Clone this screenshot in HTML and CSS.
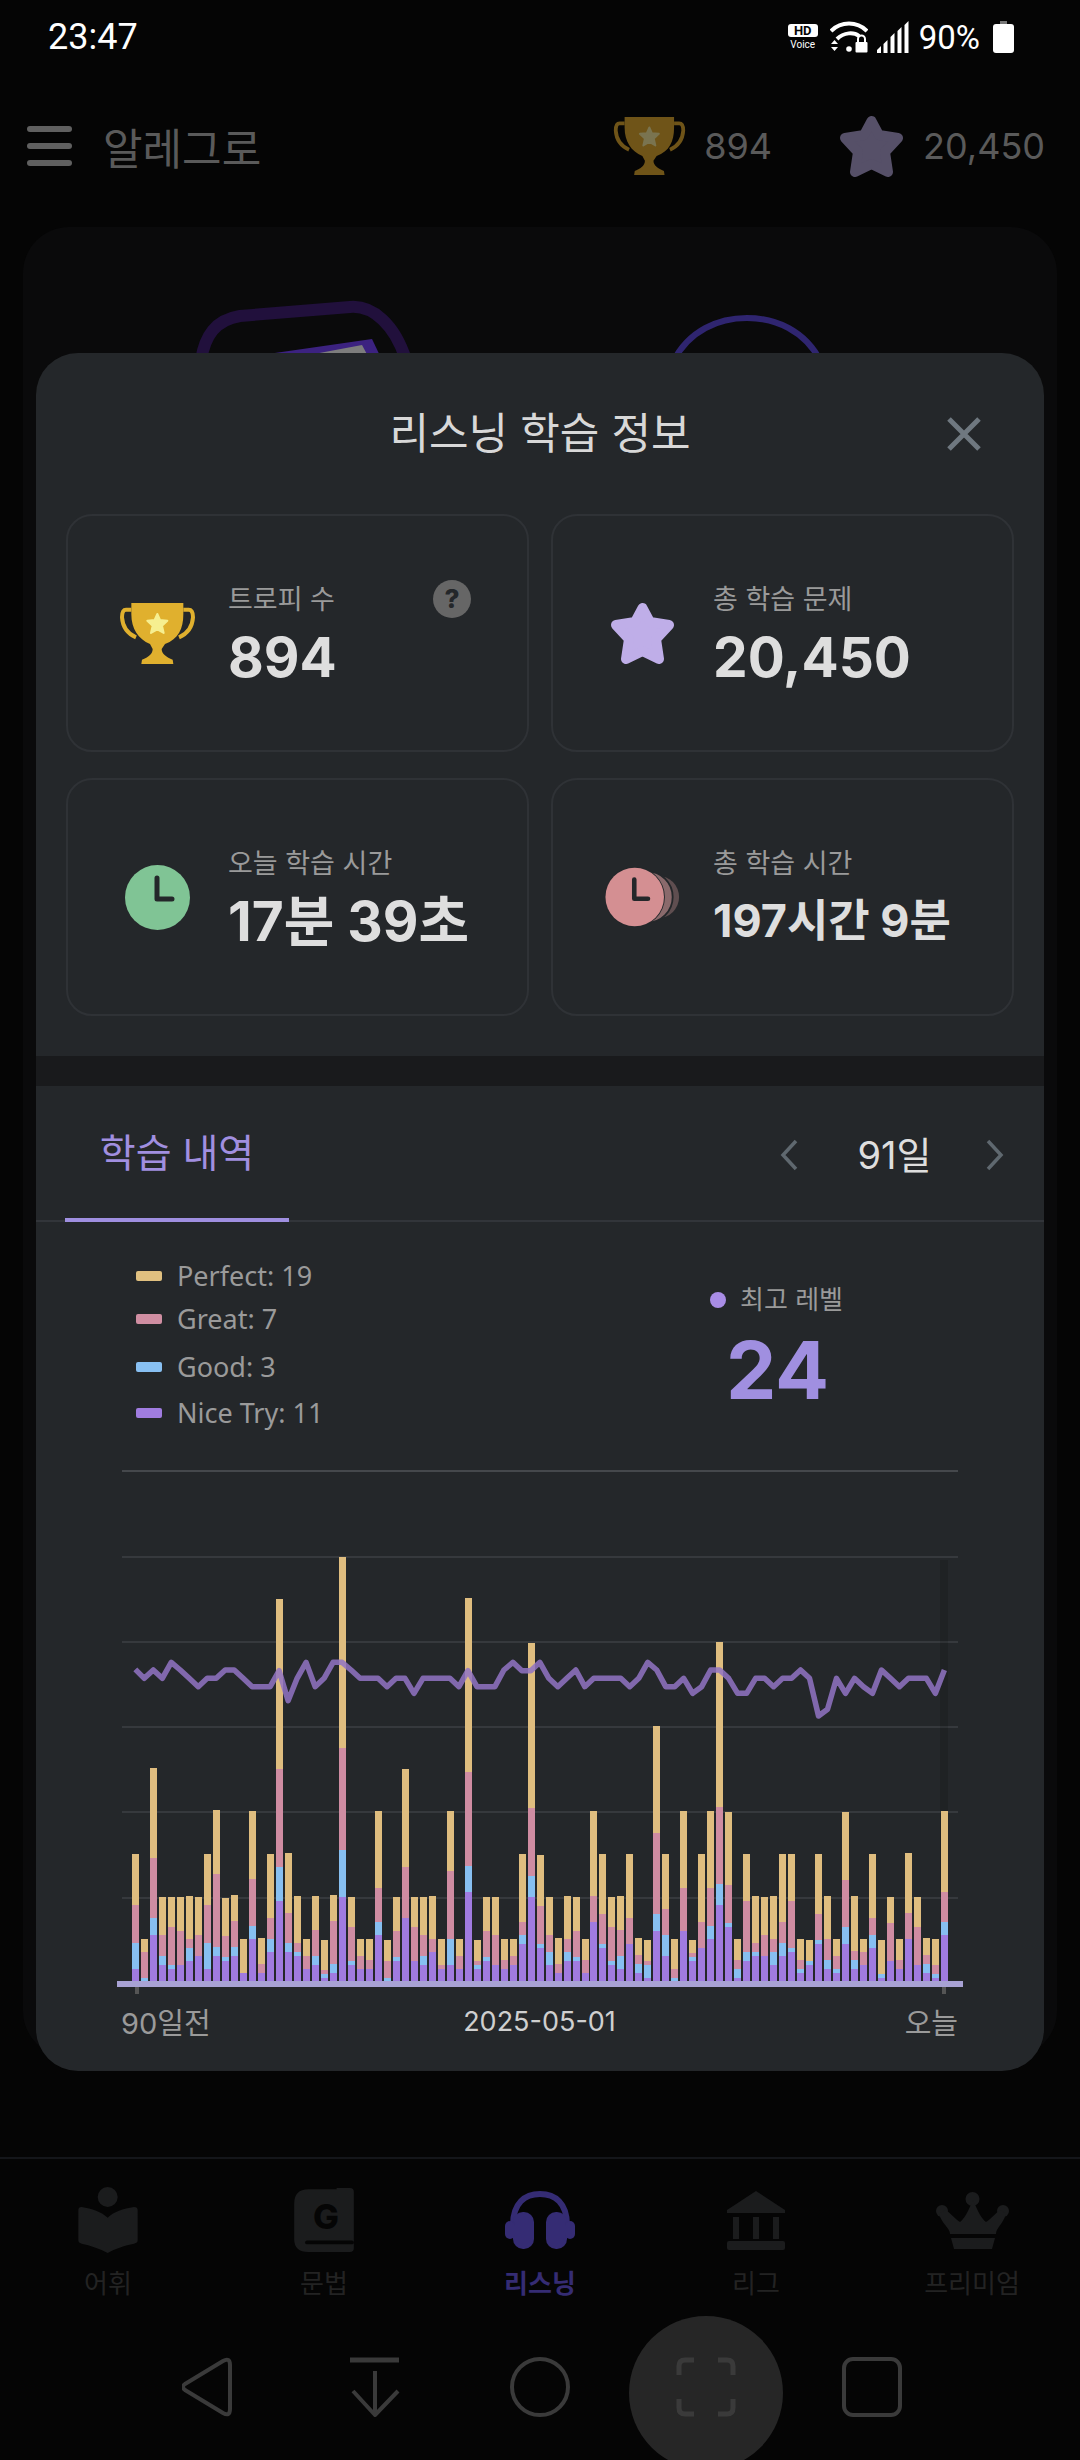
FILE: index.html
```html
<!DOCTYPE html>
<html lang="ko">
<head>
    <meta charset="utf-8">
    <title>알레그로</title>
    <link rel="stylesheet" href="styles.css">
</head>
<body>
    <svg class="defs" width="0" height="0">
        <symbol id="icon-trophy" viewBox="30 42 225 183">
            <path class="cup-handle" d="M64 62 H48 C38 62 36 72 36 85 C38 115 55 135 78 145"/>
            <path class="cup-handle" d="M220 62 H236 C246 62 249 72 249 85 C247 115 230 135 207 145"/>
            <path class="cup" d="M64 42 H220 V75 C220 120 205 150 165 165 L155 180 C155 195 170 205 188 212 L190 225 H94 L96 212 C115 205 128 195 128 180 L120 165 C85 150 64 120 64 75 Z"/>
            <polygon class="cup-star" points="142,75 150,93 172,95 156,110 161,132 142,121 123,132 128,110 112,95 134,93"/>
        </symbol>
        <symbol id="icon-star" viewBox="0 0 63 61">
            <polygon class="star-shape" points="31.5,5 39,19 58,22 45,36 48,56 31.5,48 15,56 18,36 5,22 24,19"/>
        </symbol>
    </svg>

    <div class="status-bar">
        <span class="clock">23:47</span>
        <div class="status-icons">
            <div class="hd-voice"><b>HD</b><span>Voice</span></div>
            <svg class="wifi" width="38" height="32" viewBox="0 0 38 32">
                <path d="M1 10 C11 0 27 0 37 10" fill="none" stroke="#fff" stroke-width="4"/>
                <path d="M7 18 C14 11 24 11 29 15" fill="none" stroke="#fff" stroke-width="4"/>
                <circle cx="19" cy="28" r="2.8" fill="#fff"/>
                <path d="M1 23 L4.5 19 L8 23 Z M1 26 H8 L4.5 30 Z" fill="#fff"/>
                <path d="M28 21 V18 A3.5 3.5 0 0 1 35 18 V21" fill="none" stroke="#fff" stroke-width="2"/>
                <rect x="25.5" y="21" width="12" height="10.5" rx="1" fill="#fff"/>
            </svg>
            <svg class="signal" width="32" height="32" viewBox="0 0 32 32" fill="#fff">
                <path d="M0 32 V29 L4 25 V32 Z M6.5 32 V23 L10.5 19 V32 Z M13.5 32 V16 L17.5 12 V32 Z M20.5 32 V10 L24.5 6 V32 Z M27.5 32 V4 L31.5 0 V32 Z"/>
            </svg>
            <span class="battery-text">90%</span>
            <div class="battery"></div>
        </div>
    </div>

    <div class="app-header">
        <div class="menu-btn"><span></span><span></span><span></span></div>
        <div class="app-title">알레그로</div>
        <div class="header-stats">
            <svg class="trophy trophy-dim" width="73" height="58"><use href="#icon-trophy"/></svg>
            <span class="header-num">894</span>
            <svg class="star star-dim" width="63" height="61"><use href="#icon-star"/></svg>
            <span class="header-num">20,450</span>
        </div>
    </div>

    <div class="main">
        <div class="back-card">
            <svg class="back-device" width="217" height="60" viewBox="0 0 217 60">
                <path d="M6 60 C10 36 20 20 45 16 L155 7 C178 5 200 25 211 60" fill="none" stroke="#21103c" stroke-width="12"/>
                <polygon points="32,60 177,39 187,60" fill="#3c2280"/>
                <polygon points="87,60 167,45 175,60" fill="#7d7d7d"/>
            </svg>
            <svg class="back-arc" width="156" height="46" viewBox="0 0 156 46">
                <path d="M4 47 C20 15 50 3 78 3 C106 3 136 15 152 47" fill="none" stroke="#2f2570" stroke-width="6"/>
            </svg>
        </div>
    </div>

    <div class="tab-bar">
        <div class="tab">
            <div class="tab-icon">
                <svg width="60" height="66" viewBox="55 30 178 198">
                    <circle cx="143" cy="60" r="30"/>
                    <path d="M55 100 Q55 90 65 90 C95 95 125 105 143 122 C160 105 190 95 222 90 Q233 90 233 100 V190 Q233 198 222 200 C195 205 165 215 143 228 C120 215 90 205 65 200 Q55 198 55 190 Z"/>
                </svg>
            </div>
            <span>어휘</span>
        </div>
        <div class="tab">
            <div class="tab-icon">
                <svg width="60" height="64" viewBox="702 32 180 193">
                    <path d="M745 36 H830 V32 H870 Q882 32 882 44 V213 Q882 225 870 225 H745 Q702 225 702 185 V80 Q702 36 745 36 Z"/>
                    <rect x="735" y="190" width="147" height="12" rx="6" fill="#050505"/>
                    <text class="book-letter" x="798" y="155" text-anchor="middle">G</text>
                </svg>
            </div>
            <span>문법</span>
        </div>
        <div class="tab tab-active">
            <div class="tab-icon">
                <svg width="70" height="58" viewBox="0 0 70 58">
                    <path class="band" d="M8 34 C8 12 20 3 35 3 C50 3 62 12 62 34"/>
                    <rect x="8" y="21" width="21" height="37" rx="10"/>
                    <rect x="41" y="21" width="21" height="37" rx="10"/>
                    <rect x="0" y="30" width="10" height="18" rx="5"/>
                    <rect x="60" y="30" width="10" height="18" rx="5"/>
                </svg>
            </div>
            <span>리스닝</span>
        </div>
        <div class="tab">
            <div class="tab-icon">
                <svg width="58" height="59" viewBox="0 0 58 59">
                    <path d="M29 0 L58 19 V22 H0 V19 Z"/>
                    <rect x="6" y="26" width="6" height="22"/>
                    <rect x="26" y="26" width="6" height="22"/>
                    <rect x="46" y="26" width="6" height="22"/>
                    <rect x="0" y="50" width="58" height="9" rx="2"/>
                </svg>
            </div>
            <span>리그</span>
        </div>
        <div class="tab">
            <div class="tab-icon">
                <svg width="73" height="57" viewBox="0 0 73 57">
                    <circle cx="36.5" cy="7" r="7"/>
                    <circle cx="6" cy="19" r="6"/>
                    <circle cx="67" cy="19" r="6"/>
                    <path d="M37 8 C42 20 46 27 50 30 C55 27 60 20 65 18 L70 22 C67 32 60 36 60 42 H14 C14 36 6 32 3 22 L9 18 C14 20 19 27 24 30 C28 27 32 20 37 8 Z"/>
                    <path d="M15 46 H59 L56 57 H18 Z"/>
                </svg>
            </div>
            <span>프리미엄</span>
        </div>
    </div>

    <div class="system-nav">
        <div class="sys-item">
            <svg width="52" height="60" viewBox="0 0 52 60">
                <path d="M3 27 L41 4 Q48 0 48 8 V52 Q48 60 41 56 L3 33 Q-1 30 3 27 Z"/>
            </svg>
        </div>
        <div class="sys-item">
            <svg width="54" height="60" viewBox="0 0 54 60">
                <path d="M3 3 H52" stroke-width="5"/>
                <path d="M28 14 V58 M6 34 L28 58 L51 34"/>
            </svg>
        </div>
        <div class="sys-item">
            <svg width="60" height="60" viewBox="0 0 60 60"><circle cx="30" cy="30" r="28"/></svg>
        </div>
        <div class="sys-item">
            <div class="capture-btn">
                <svg width="60" height="60" viewBox="0 0 60 60">
                    <path d="M3 18 V9 Q3 3 9 3 H18 M42 3 H51 Q57 3 57 9 V18 M57 42 V51 Q57 57 51 57 H42 M18 57 H9 Q3 57 3 51 V42" stroke-width="5"/>
                </svg>
            </div>
        </div>
        <div class="sys-item">
            <svg width="60" height="60" viewBox="0 0 60 60"><rect x="2" y="2" width="56" height="56" rx="9"/></svg>
        </div>
    </div>

    <!-- 모달 -->
    <div class="modal">
        <div class="modal-head">
            <h2>리스닝 학습 정보</h2>
            <svg class="close-btn" width="36" height="36" viewBox="0 0 36 36">
                <path d="M3 3 L33 33 M33 3 L3 33"/>
            </svg>
        </div>

        <div class="stats">
            <div class="stat-card">
                <div class="stat-icon">
                    <svg class="trophy" width="75" height="61"><use href="#icon-trophy"/></svg>
                </div>
                <div class="stat-text">
                    <div class="stat-label">트로피 수</div>
                    <div class="stat-value">894</div>
                </div>
                <div class="help-badge">?</div>
            </div>
            <div class="stat-card">
                <div class="stat-icon">
                    <svg class="star" width="63" height="61"><use href="#icon-star"/></svg>
                </div>
                <div class="stat-text">
                    <div class="stat-label">총 학습 문제</div>
                    <div class="stat-value">20,450</div>
                </div>
            </div>
            <div class="stat-card">
                <div class="stat-icon">
                    <svg width="65" height="65" viewBox="0 0 65 65">
                        <circle cx="32.5" cy="32.5" r="32.5" fill="#80c495"/>
                        <path class="clock-hand" d="M32 13 V34 H47"/>
                    </svg>
                </div>
                <div class="stat-text">
                    <div class="stat-label">오늘 학습 시간</div>
                    <div class="stat-value">17분 39초</div>
                </div>
            </div>
            <div class="stat-card">
                <div class="stat-icon stat-icon-wide">
                    <svg width="82" height="64" viewBox="0 0 82 64">
                        <circle cx="58" cy="32" r="23" fill="#5f4e50"/>
                        <circle cx="46" cy="32" r="28" fill="#8a6a6c" stroke="#24272a" stroke-width="2"/>
                        <circle cx="32.5" cy="32" r="33" fill="#24272a"/>
                        <circle cx="32.5" cy="32" r="32" fill="#d48f92"/>
                        <path class="clock-hand" d="M32 13 V34 H47"/>
                    </svg>
                </div>
                <div class="stat-text">
                    <div class="stat-label">총 학습 시간</div>
                    <div class="stat-value stat-value-small">197시간 9분</div>
                </div>
            </div>
        </div>

        <div class="band"></div>

        <div class="tab-row">
            <div class="history-tab">학습 내역</div>
            <div class="pager">
                <svg width="18" height="32" viewBox="0 0 18 32"><path d="M16 2 L3 16 L16 30"/></svg>
                <span>91일</span>
                <svg width="18" height="32" viewBox="0 0 18 32"><path d="M2 2 L15 16 L2 30"/></svg>
            </div>
        </div>

        <div class="chart-top">
            <ul class="legend">
                <li><i class="swatch swatch-perfect"></i>Perfect: 19</li>
                <li class="legend-great"><i class="swatch swatch-great"></i>Great: 7</li>
                <li><i class="swatch swatch-good"></i>Good: 3</li>
                <li><i class="swatch swatch-nice"></i>Nice Try: 11</li>
            </ul>
            <div class="best-level">
                <div class="best-label"><i class="best-dot"></i>최고 레벨</div>
                <div class="best-value">24</div>
            </div>
        </div>

        <svg id="chart" class="chart" width="1008" height="540" viewBox="36 1460 1008 540"></svg>

        <div class="chart-labels">
            <span>90일전</span>
            <span class="chart-date">2025-05-01</span>
            <span class="chart-today">오늘</span>
        </div>
    </div>

    <script src="chart.js"></script>
</body>
</html>
```

FILE: styles.css
```css
* {
    box-sizing: border-box;
}
html, body {
    margin: 0;
    height: 2460px;
    overflow: hidden;
}
body {
    position: relative;
    display: flex;
    flex-direction: column;
    background-color: #050505;
    font-family: Inter, "Noto Sans CJK KR", sans-serif;
}
.defs {
    position: absolute;
}

/* status bar */
.status-bar {
    height: 74px;
    flex: none;
    display: flex;
    align-items: center;
    justify-content: space-between;
    padding: 0 66px 0 48px;
    color: #fff;
    font-family: Roboto, sans-serif;
}
.clock {
    font-size: 36px;
}
.status-icons {
    display: flex;
    align-items: center;
}
.hd-voice {
    width: 30px;
    margin-right: 12px;
    display: flex;
    flex-direction: column;
    align-items: center;
    font-size: 10px;
    line-height: 11px;
}
.hd-voice b {
    width: 30px;
    height: 13px;
    margin-bottom: 2px;
    border-radius: 3px;
    background-color: #fff;
    color: #050505;
    font-size: 13px;
    line-height: 13px;
    text-align: center;
}
.signal {
    margin-left: 9px;
}
.battery-text {
    margin-left: 10px;
    font-size: 33px;
}
.battery {
    position: relative;
    width: 21px;
    height: 29px;
    margin-left: 13px;
    margin-top: 3px;
    border-radius: 3px;
    background-color: #fff;
}
.battery::before {
    content: "";
    position: absolute;
    left: 7px;
    top: -3px;
    width: 7px;
    height: 3px;
    background-color: #777;
}

/* app header, dimmed behind the modal */
.app-header {
    height: 144px;
    flex: none;
    display: flex;
    align-items: center;
    padding: 0 35px 0 27px;
    color: #5a5a5a;
}
.menu-btn {
    width: 45px;
    display: flex;
    flex-direction: column;
    gap: 11px;
}
.menu-btn span {
    height: 6px;
    border-radius: 3px;
    background-color: #606060;
}
.app-title {
    margin-left: 31px;
    font-size: 43px;
}
.header-stats {
    margin-left: auto;
    display: flex;
    align-items: center;
}
.header-num {
    margin-left: 18px;
    margin-right: 68px;
    font-size: 36px;
}
.header-num:last-child {
    margin-left: 20px;
    margin-right: 0;
}
.cup {
    fill: var(--cup);
}
.cup-handle {
    fill: none;
    stroke: var(--cup);
    stroke-width: 12;
}
.cup-star {
    fill: var(--cup-star);
    stroke: var(--cup-star);
    stroke-width: 6;
    stroke-linejoin: round;
}
.trophy {
    --cup: #e0b02e;
    --cup-star: #f6ef90;
}
.trophy-dim {
    --cup: #6f5418;
    --cup-star: #7a7450;
}
.star-shape {
    fill: var(--star);
    stroke: var(--star);
    stroke-width: 10;
    stroke-linejoin: round;
}
.star {
    --star: #bfaee8;
}
.star-dim {
    --star: #565068;
}

/* page behind the modal */
.main {
    height: 1939px;
    flex: none;
    padding: 9px 23px 0;
}
.back-card {
    height: 1830px;
    display: flex;
    align-items: flex-start;
    gap: 257px;
    padding: 73px 0 0 172px;
    border-radius: 46px;
    background-color: #0a0a0b;
}
.back-arc {
    margin-top: 15px;
}

/* bottom tabs */
.tab-bar {
    height: 159px;
    flex: none;
    display: flex;
    padding-top: 26px;
    border-top: 2px solid #14161a;
    color: #232323;
    font-size: 26px;
}
.tab {
    flex: 1;
    display: flex;
    flex-direction: column;
    align-items: center;
}
.tab-icon {
    height: 70px;
    display: flex;
    align-items: center;
    justify-content: center;
    margin-bottom: 8px;
}
.tab-icon svg {
    fill: #1b1c1d;
}
.book-letter {
    font-family: Inter, sans-serif;
    font-size: 104px;
    font-weight: 800;
    fill: #050505;
}
.tab-active {
    color: #352c74;
    font-weight: 700;
}
.tab-active .tab-icon svg {
    fill: #352c74;
}
.tab-active .band {
    fill: none;
    stroke: #352c74;
    stroke-width: 6;
}

/* system navigation */
.system-nav {
    flex: none;
    display: flex;
    justify-content: center;
    height: 154px;
}
.sys-item {
    width: 166px;
    display: flex;
    align-items: center;
    justify-content: center;
}
.sys-item svg {
    margin-bottom: 12px;
    fill: none;
    stroke: #3a3a3a;
    stroke-width: 4;
    stroke-linejoin: round;
}
.capture-btn {
    width: 154px;
    height: 154px;
    flex: none;
    display: flex;
    align-items: center;
    justify-content: center;
    border-radius: 50%;
    background-color: #262626;
}

/* modal */
.modal {
    position: absolute;
    left: 36px;
    top: 353px;
    width: 1008px;
    height: 1718px;
    border-radius: 42px;
    background-color: #24272a;
    color: #dedede;
}
.modal-head {
    position: relative;
    height: 161px;
    display: flex;
    justify-content: center;
    padding-top: 50px;
}
.modal-head h2 {
    margin: 0;
    color: #d8d8d8;
    font-size: 43px;
    font-weight: 400;
    line-height: 60px;
}
.close-btn {
    position: absolute;
    right: 62px;
    top: 63px;
}
.close-btn path {
    fill: none;
    stroke: #6f7880;
    stroke-width: 5;
}
.stats {
    display: grid;
    grid-template-columns: 463px 463px;
    grid-auto-rows: 238px;
    gap: 26px 22px;
    padding: 0 30px;
}
.stat-card {
    position: relative;
    display: flex;
    align-items: center;
    padding-left: 52px;
    border: 2px solid #2f3236;
    border-radius: 26px;
}
.stat-icon {
    width: 75px;
    flex: none;
    display: flex;
    justify-content: center;
    margin-right: 33px;
}
.stat-icon-wide {
    justify-content: flex-start;
}
.stat-text {
    padding-top: 8px;
}
.stat-label {
    font-size: 27px;
    line-height: 36px;
    color: #9a9a9a;
}
.stat-value {
    margin-top: 3px;
    font-size: 55px;
    font-weight: 700;
    line-height: 72px;
}
.stat-value-small {
    font-size: 45px;
}
.help-badge {
    position: absolute;
    right: 56px;
    top: 64px;
    width: 38px;
    height: 38px;
    border-radius: 50%;
    background-color: #666;
    color: #24272a;
    font-size: 26px;
    font-weight: 800;
    line-height: 38px;
    text-align: center;
}
.band {
    height: 30px;
    margin-top: 40px;
    background-color: #191a1c;
}
.tab-row {
    height: 136px;
    display: flex;
    justify-content: space-between;
    border-bottom: 2px solid #32353a;
}
.history-tab {
    width: 224px;
    height: 136px;
    margin-left: 29px;
    border-bottom: 4px solid #9f8fe0;
    color: #a18fe0;
    font-size: 39px;
    line-height: 134px;
    text-align: center;
}
.pager {
    display: flex;
    align-items: flex-start;
    padding: 53px 40px 0 0;
}
.pager svg {
    fill: none;
    stroke: #5f686f;
    stroke-width: 3.5;
}
.pager span {
    width: 188px;
    margin-top: -11px;
    padding-left: 5px;
    font-size: 38px;
    line-height: 54px;
    text-align: center;
}
.chart-top {
    height: 238px;
    display: flex;
}
.legend {
    width: 674px;
    flex: none;
    margin: 0;
    padding: 31px 0 0 100px;
    list-style: none;
    font-family: "Noto Sans", sans-serif;
    font-size: 27px;
    line-height: 46px;
    color: #9a9a9a;
}
.legend li {
    display: flex;
    align-items: center;
}
.legend-great {
    margin-top: -3px;
    margin-bottom: 2px;
}
.swatch {
    width: 26px;
    height: 10px;
    margin-right: 15px;
    border-radius: 2px;
}
.swatch-perfect { background-color: #e0c080; }
.swatch-great { background-color: #d08ea2; }
.swatch-good { background-color: #88c0f2; }
.swatch-nice { background-color: #a07ce0; }
.best-level {
    padding-top: 60px;
    width: 135px;
    text-align: center;
}
.best-label {
    display: flex;
    align-items: center;
    font-size: 26px;
    line-height: 36px;
    color: #9a9a9a;
    white-space: nowrap;
}
.best-dot {
    width: 16px;
    height: 16px;
    margin-right: 14px;
    border-radius: 50%;
    background-color: #a98de6;
}
.best-value {
    margin-top: 7px;
    color: #a08fe0;
    font-size: 80px;
    font-weight: 700;
    line-height: 90px;
}
.chart {
    display: block;
}
.chart-labels {
    display: grid;
    grid-template-columns: 1fr auto 1fr;
    align-items: center;
    height: 40px;
    padding: 0 86px 0 85px;
    font-size: 29px;
    color: #9a9a9a;
}
.chart-date {
    font-size: 27px;
    color: #cfcfcf;
}
.chart-today {
    text-align: right;
}
.clock-hand {
    fill: none;
    stroke: #24272a;
    stroke-width: 5;
    stroke-linejoin: round;
    stroke-linecap: round;
}
```

FILE: chart.js
```js
// tops of each stack segment (perfect, great, good, nice try), 3 units = 1px, baseline 1323
const bars = [
    [942,1095,1209,1287],[1197,1236,1314,1323],[684,954,1134,1185],[1071,1185,1248,1275],
    [1071,1161,1275,1287],[1071,1173,1275,1275],[1068,1197,1224,1263],[1071,1185,1248,1248],
    [942,1095,1209,1287],[810,1002,1221,1248],[1074,1188,1251,1263],[1065,1143,1221,1248],
    [1197,1299,1299,1299],[813,1017,1158,1197],[1194,1272,1299,1299],[942,1134,1197,1236],
    [177,687,981,1083],[939,1119,1209,1236],[1068,1209,1236,1248],[1197,1248,1287,1287],
    [1068,1170,1248,1275],[1200,1290,1302,1314],[1065,1143,1272,1299],[51,624,930,1071],
    [1071,1161,1263,1275],[1197,1248,1287,1287],[1197,1260,1287,1287],[813,1044,1146,1185],
    [1200,1263,1314,1323],[1071,1173,1251,1263],[687,981,1134,1134],[1071,1161,1263,1263],
    [1071,1185,1248,1275],[1068,1197,1236,1236],[1197,1275,1287,1287],[813,993,1197,1275],
    [1197,1248,1287,1287],[174,696,978,1056],[1200,1263,1275,1287],[1071,1173,1251,1263],
    [1071,1185,1275,1275],[1197,1260,1287,1287],[1197,1248,1275,1275],[942,1146,1185,1212],
    [309,804,1008,1071],[945,1098,1212,1224],[1071,1185,1236,1275],[1194,1272,1299,1299],
    [1068,1197,1236,1263],[1071,1173,1251,1263],[1197,1260,1299,1299],[813,1068,1146,1146],
    [942,1122,1212,1224],[1071,1161,1263,1275],[1068,1170,1248,1287],[942,1134,1212,1212],
    [1194,1245,1272,1299],[1200,1263,1275,1314],[558,879,1122,1173],[942,1107,1185,1248],
    [1197,1287,1314,1323],[813,1044,1173,1173],[1200,1239,1251,1263],[942,1146,1224,1224],
    [813,1044,1158,1197],[306,801,1032,1095],[816,1035,1149,1161],[1197,1260,1287,1314],
    [942,1083,1236,1263],[1068,1209,1236,1248],[1071,1185,1248,1248],[1068,1197,1236,1275],
    [942,1146,1209,1248],[942,1083,1224,1236],[1197,1260,1287,1299],[1200,1263,1263,1275],
    [942,1122,1200,1212],[1068,1197,1260,1287],[1197,1248,1287,1299],[816,1020,1161,1212],
    [1068,1233,1260,1287],[1197,1236,1275,1275],[942,1134,1185,1224],[1200,1302,1302,1314],
    [1071,1149,1263,1263],[1197,1260,1287,1287],[939,1119,1197,1197],[1071,1161,1275,1275],
    [1194,1245,1272,1299],[1197,1275,1302,1314],[813,1056,1146,1185]
];
// max level per day, same units
const levels = [
    388,415,390,415,367,390,415,440,415,415,390,390,415,440,440,440,392,482,415,367,440,415,367,
    367,390,415,415,415,440,415,415,460,415,415,415,415,440,392,440,440,440,390,367,392,392,367,
    415,440,415,390,440,415,415,415,415,440,415,367,390,440,440,415,460,440,390,390,415,460,460,
    415,415,440,415,415,390,415,528,508,415,460,415,440,460,390,415,440,415,415,415,460,390
];
const colors = ['#dfbd7f', '#cf8ca2', '#87bff1', '#a07be0'];
const gridY = [1470, 1556, 1641, 1726, 1811, 1897];

function toY(v) {
    return 1540 + v / 3;
}
function barX(i) {
    return 132 + Math.round(i * 8.99);
}

let html = '';
gridY.forEach((y, i) => {
    const color = i === 0 ? '#45484c' : '#36393d';
    html += `<rect x="122" y="${y}" width="836" height="2" fill="${color}"/>`;
});
html += '<rect x="940" y="1560" width="8" height="400" fill="#000" opacity="0.12"/>';

bars.forEach((tops, i) => {
    tops.forEach((top, s) => {
        const bottom = s < 3 ? tops[s + 1] : 1323;
        if (bottom > top) {
            html += `<rect x="${barX(i)}" y="${toY(top)}" width="7" height="${(bottom - top) / 3}" fill="${colors[s]}"/>`;
        }
    });
});

const points = levels.map((v, i) => `${135.3 + i * 8.99},${toY(v)}`).join(' ');
html += `<polyline points="${points}" fill="none" stroke="#9274c4" stroke-opacity="0.85" stroke-width="5.5" stroke-linejoin="round"/>`;

html += '<rect x="117" y="1981" width="846" height="6" fill="#a8a2d4"/>';
html += '<rect x="135" y="1987" width="4" height="7" fill="#555"/>';
html += '<rect x="942" y="1987" width="4" height="7" fill="#555"/>';

document.getElementById('chart').innerHTML = html;
```
